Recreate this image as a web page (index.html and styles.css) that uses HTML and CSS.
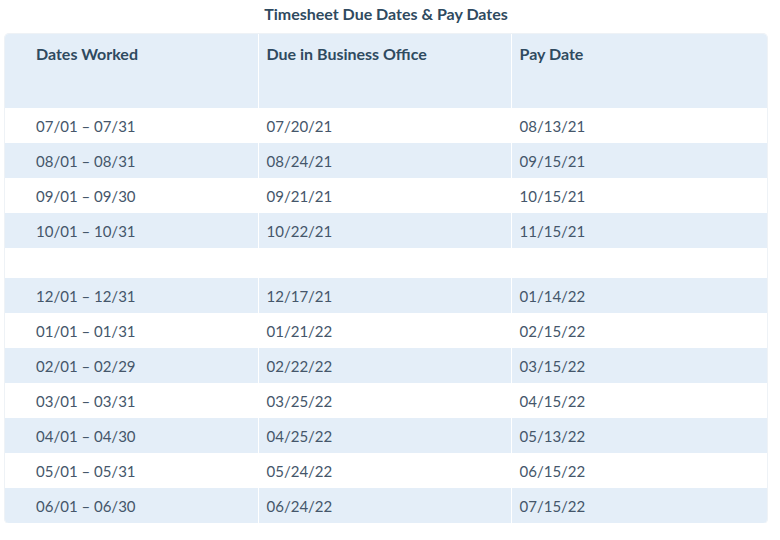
FILE: index.html
```html
<!DOCTYPE html>
<html>
<head>
<meta charset="utf-8">
<link rel="stylesheet" href="styles.css">
</head>
<body>
<div class="page">
  <h1 class="title">Timesheet Due Dates &amp; Pay Dates</h1>
  <div class="card">
    <table class="dates">
      <colgroup>
        <col class="c1"><col class="c2"><col class="c3">
      </colgroup>
      <thead>
        <tr><th class="first">Dates Worked</th><th>Due in Business Office</th><th>Pay Date</th></tr>
      </thead>
      <tbody>
        <tr><td class="first">07/01 – 07/31</td><td>07/20/21</td><td>08/13/21</td></tr>
        <tr><td class="first">08/01 – 08/31</td><td>08/24/21</td><td>09/15/21</td></tr>
        <tr><td class="first">09/01 – 09/30</td><td>09/21/21</td><td>10/15/21</td></tr>
        <tr><td class="first">10/01 – 10/31</td><td>10/22/21</td><td>11/15/21</td></tr>
        <tr class="blank"><td class="first"></td><td></td><td></td></tr>
        <tr><td class="first">12/01 – 12/31</td><td>12/17/21</td><td>01/14/22</td></tr>
        <tr><td class="first">01/01 – 01/31</td><td>01/21/22</td><td>02/15/22</td></tr>
        <tr><td class="first">02/01 – 02/29</td><td>02/22/22</td><td>03/15/22</td></tr>
        <tr><td class="first">03/01 – 03/31</td><td>03/25/22</td><td>04/15/22</td></tr>
        <tr><td class="first">04/01 – 04/30</td><td>04/25/22</td><td>05/13/22</td></tr>
        <tr><td class="first">05/01 – 05/31</td><td>05/24/22</td><td>06/15/22</td></tr>
        <tr><td class="first">06/01 – 06/30</td><td>06/24/22</td><td>07/15/22</td></tr>
      </tbody>
    </table>
  </div>
</div>
</body>
</html>
```
FILE: styles.css
```css
html, body {
  margin: 0;
  padding: 0;
  background: #ffffff;
}
body {
  font-family: Lato, "Open Sans", sans-serif;
  color: #44566a;
}
.page {
  width: 762px;
  padding: 4px 0 0 5px;
}
.title {
  margin: 0 0 10px 0;
  font-size: 16px;
  line-height: 20px;
  font-weight: 700;
  text-align: center;
  color: #2f4a60;
}
.card {
  border-radius: 4px;
  overflow: hidden;
  box-shadow: 0 0 0 1px #eef2f6;
}
.dates {
  width: 762px;
  border-collapse: collapse;
  table-layout: fixed;
}
.c1 { width: 253px; }
.c2 { width: 253px; }
.c3 { width: 256px; }
.dates th {
  height: 74px;
  box-sizing: border-box;
  padding: 10px 8px 0 8px;
  vertical-align: top;
  text-align: left;
  font-size: 16px;
  line-height: 20px;
  font-weight: 700;
  color: #2f4a60;
  background: #e4eef8;
  border-left: 1px solid #ffffff;
}
.dates td {
  height: 35px;
  box-sizing: border-box;
  padding: 0 8px;
  vertical-align: middle;
  font-size: 15px;
  line-height: 20px;
  color: #45566a;
  border-left: 1px solid #ffffff;
}
.dates .first {
  padding-left: 31px;
  border-left: none;
}
.dates tbody tr:nth-child(even) td {
  background: #e4eef8;
}
.dates tbody tr.blank td {
  height: 30px;
}
```
